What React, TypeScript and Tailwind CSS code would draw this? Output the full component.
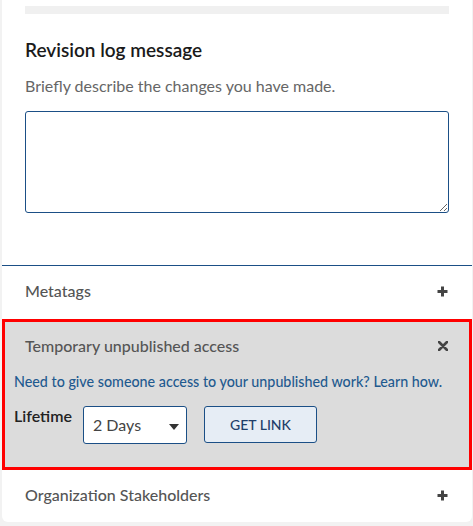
import React from 'react';

const PlusIcon = () => (
  <svg width="11" height="11" viewBox="0 0 11 11" className="text-[#444]">
    <path d="M5.5 0.5v10M0.5 5.5h10" stroke="currentColor" strokeWidth="3" />
  </svg>
);

const CloseIcon = () => (
  <svg width="10" height="10" viewBox="0 0 10 10" className="text-[#444]">
    <path d="M1 1l8 8M9 1l-8 8" stroke="currentColor" strokeWidth="2.6" strokeLinecap="round" />
  </svg>
);

const App = () => {
  return (
    <div
      className="min-h-screen bg-[#f2f2f2] pl-[2px] pr-[1px] pb-[4px]"
      style={{ fontFamily: 'Lato, "Open Sans", sans-serif' }}
    >
      <div className="bg-white rounded-b-[6px] overflow-hidden">
        {/* Revision log */}
        <div className="px-[23px] pb-[52px]">
          <div className="h-[6px]" />
          <div className="h-[8px] bg-[#f0f0f0]" />
          <h2 className="mt-[24px] text-[19px] leading-[24px] font-semibold text-[#1a1a1a]">
            Revision log message
          </h2>
          <p className="mt-[14px] text-[16px] leading-[20px] text-[#666]">
            Briefly describe the changes you have made.
          </p>
          <textarea className="mt-[15px] block w-full h-[102px] border border-[#1b4f86] rounded-[3px] bg-white outline-none" />
        </div>

        <div className="border-t border-[#1b4f86]" />

        {/* Metatags */}
        <div className="h-[53px] px-[23px] pt-[15px] flex items-start justify-between">
          <span className="text-[16px] leading-[20px] font-medium text-[#555]">Metatags</span>
          <span className="mt-[5px] mr-[1px]">
            <PlusIcon />
          </span>
        </div>

        {/* Temporary unpublished access */}
        <div className="border-[3px] border-[#ff0000] bg-[#dcdcdc] pt-[14px] pb-[23px]">
          <div className="pl-[20px] pr-[21px] flex items-center justify-between">
            <span className="text-[16px] leading-[20px] font-medium text-[#555]">
              Temporary unpublished access
            </span>
            <CloseIcon />
          </div>
          <p className="mt-[16px] pl-[9px] text-[14.3px] leading-[20px] font-medium text-[#1f5a8f]">
            Need to give someone access to your unpublished work? Learn how.
          </p>
          <div className="mt-[14px] pl-[9px] flex items-start">
            <span className="text-[16px] leading-[20px] font-semibold text-[#222]">Lifetime</span>
            <div className="ml-[11px] w-[104px] h-[38px] bg-white border border-[#1b4f86] rounded-[3px] flex items-center justify-between pl-[9px] pr-[7px]">
              <span className="text-[16px] text-[#444]">2 Days</span>
              <svg width="10" height="6" viewBox="0 0 10 6" className="mt-[3px]">
                <path d="M0 0h10L5 6z" fill="#333" />
              </svg>
            </div>
            <button className="ml-[17px] w-[113px] h-[37px] bg-[#e6edf5] border border-[#1b4f86] rounded-[3px] text-[14px] font-medium text-[#1f3f6a]">
              GET LINK
            </button>
          </div>
        </div>

        {/* Organization Stakeholders */}
        <div className="h-[52px] px-[23px] pt-[15px] flex items-start justify-between">
          <span className="text-[16px] leading-[20px] font-medium text-[#555]">
            Organization Stakeholders
          </span>
          <span className="mt-[5px] mr-[1px]">
            <PlusIcon />
          </span>
        </div>
      </div>
    </div>
  );
};

export default App;
